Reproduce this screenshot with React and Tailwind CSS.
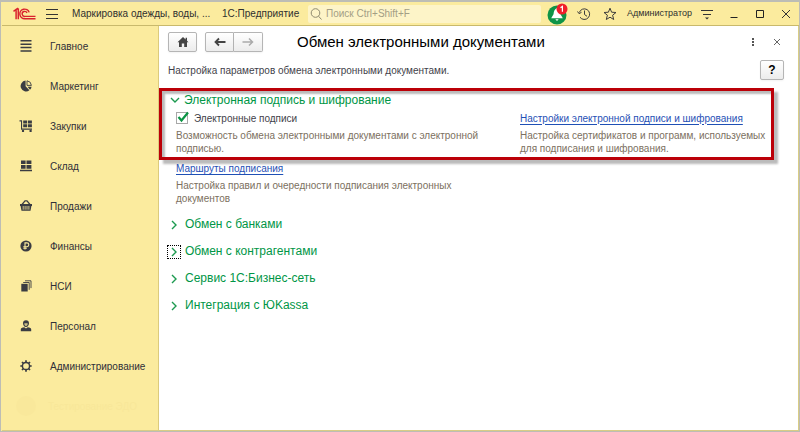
import { useState } from 'react';

const iconClass = 'h-4 w-4 shrink-0 text-[#3a3c42]';

const MenuIcon = () => (
  <svg viewBox="0 0 16 16" className={iconClass} fill="none" stroke="currentColor" strokeWidth="1.5">
    <path d="M2.5 2.8h11M2.5 6.2h11M2.5 9.6h11M2.5 13h11" />
  </svg>
);

const PieIcon = () => (
  <svg viewBox="0 0 16 16" className={iconClass} fill="currentColor">
    <path d="M7.6 2.6v5.6l3.8 4A5.4 5.4 0 1 1 7.6 2.6z" />
    <path d="M9 2.8a5 5 0 0 1 4.4 4.6H9z" fill="none" stroke="currentColor" strokeWidth="0.9" />
    <path d="M9.6 8.8h4a5 5 0 0 1-1.6 3z" />
  </svg>
);

const CartIcon = () => (
  <svg viewBox="0 0 16 16" className={iconClass} fill="currentColor">
    <path d="M1.5 2.3h2.6v8.2H14v1.2H3V3.5H1.5zM5.2 2.6h3.9v3H5.2zM9.9 2.6h4v3h-4zM5.2 6.3h3.9v3H5.2zM9.9 6.3h4v3h-4z" />
    <circle cx="5" cy="12.9" r="1.2" />
    <circle cx="12.6" cy="12.9" r="1.2" />
  </svg>
);

const StockIcon = () => (
  <svg viewBox="0 0 16 16" className={iconClass} fill="currentColor">
    <path d="M3 2.4h4.6v3.7H3zM8.5 2.4h4.9v3.7H8.5zM3 7h4.6v3.8H3zM8.5 7h4.9v3.8H8.5zM2 11.8h12v1.4H2z" />
  </svg>
);

const BasketIcon = () => (
  <svg viewBox="0 0 16 16" className={iconClass}>
    <path d="M4 6.5l3-3.7h2l3 3.7" fill="none" stroke="currentColor" strokeWidth="1.2" />
    <path d="M2 6h12v2h-.6l-.9 4.8h-9L2.6 8H2z" fill="currentColor" />
    <path d="M5.2 8v3.7M7.1 8v3.7M9 8v3.7M10.9 8v3.7" stroke="#fbeb9e" strokeWidth="0.8" />
  </svg>
);

const RubleIcon = () => (
  <svg viewBox="0 0 16 16" className={iconClass}>
    <circle cx="8" cy="8" r="5.6" fill="currentColor" />
    <path d="M7 11.5V4.9h1.9a1.9 1.9 0 0 1 0 3.8H5.3M5.3 10.2h3.5" fill="none" stroke="#fbeb9e" strokeWidth="1.1" />
  </svg>
);

const CopyIcon = () => (
  <svg viewBox="0 0 16 16" className={iconClass} fill="currentColor">
    <path d="M3.3 5.8h6.4v7.7H3.3z" />
    <path d="M5.2 4.5h6v7.3M7 2.8h6v7.3" fill="none" stroke="currentColor" strokeWidth="0.9" />
  </svg>
);

const PersonIcon = () => (
  <svg viewBox="0 0 16 16" className={iconClass} fill="currentColor">
    <path d="M8 2.3c1.9 0 3 1.2 3 3S9.9 9 8 9 5 7.1 5 5.3s1.100-3 3-3z" />
    <path d="M6.3 5.3h3.4c0 1.7-.6 2.8-1.7 2.8S6.3 7 6.3 5.3z" fill="#c9bd86" />
    <path d="M2.8 13.200v-2c0-1.200 1.300-1.800 3.500-2L8 10.400l1.700-1.200c2.200.2 3.500.8 3.500 2v2z" />
  </svg>
);

const GearIcon = () => (
  <svg viewBox="0 0 16 16" className={iconClass} fill="none" stroke="currentColor">
    <circle cx="8" cy="8" r="3.6" strokeWidth="1.5" />
    <path d="M8 2.3v2M8 11.7v2M2.3 8h2M11.7 8h2M4 4l1.400 1.400M10.600 10.600L12 12M4 12l1.400-1.400M10.600 5.400L12 4" strokeWidth="1.7" />
  </svg>
);

const SECTIONS = [
  { title: 'Главное', Icon: MenuIcon },
  { title: 'Маркетинг', Icon: PieIcon },
  { title: 'Закупки', Icon: CartIcon },
  { title: 'Склад', Icon: StockIcon },
  { title: 'Продажи', Icon: BasketIcon },
  { title: 'Финансы', Icon: RubleIcon },
  { title: 'НСИ', Icon: CopyIcon },
  { title: 'Персонал', Icon: PersonIcon },
  { title: 'Администрирование', Icon: GearIcon },
];

const GROUPS = [
  { title: 'Обмен с банками' },
  { title: 'Обмен с контрагентами', focused: true },
  { title: 'Сервис 1С:Бизнес-сеть' },
  { title: 'Интеграция с ЮKassa' },
];

const Logo = () => (
  <svg viewBox="0 0 24 14" className="h-3.5 w-6 shrink-0" fill="none" stroke="#d9232e">
    <path d="M1.500 4.300L4.100 2.400v9.900M6.300 1.500v10.800M4.100 2.600L6.300 1.200" strokeWidth="1.5" />
    <path d="M17.200 5.400A4.800 4.800 0 1 0 13 11.700h10.500" strokeWidth="1.4" />
    <path d="M15 6A2.500 2.500 0 1 0 13 9.400h10.500" strokeWidth="1.4" />
  </svg>
);

const TopBar = () => (
  <header className="flex h-6 items-center border-b border-[#c9b96c] bg-[#fbeb9e] pl-2.5 text-[#2f2f2f]">
    <Logo />
    <button aria-label="Меню" className="ml-2.5">
      <svg viewBox="0 0 12 12" className="h-3 w-3" stroke="#333" strokeWidth="1">
        <path d="M0 1.5h12M0 6.5h12M0 10.5h12" />
      </svg>
    </button>
    <span className="ml-3.5 w-[150px] shrink-0 whitespace-nowrap">Маркировка одежды, воды, ...</span>
    <span className="w-[86px] shrink-0 whitespace-nowrap">1С:Предприятие</span>
    <label className="flex h-[18px] min-w-0 flex-1 items-center gap-1 rounded-xs bg-[#fdf4c8] pl-0.5">
      <svg viewBox="0 0 12 12" className="h-3 w-3 shrink-0" fill="none" stroke="#8f8a70">
        <circle cx="5.5" cy="5" r="4.3" />
        <path d="M8.5 8.2L11.5 11.5" />
      </svg>
      <input
        type="text"
        aria-label="Поиск"
        placeholder="Поиск Ctrl+Shift+F"
        className="w-full bg-transparent text-[10px] outline-none placeholder:text-[#a39e85]"
      />
    </label>
    <button aria-label="Уведомления" className="ml-1.5">
      <svg viewBox="0 0 22 22" className="h-[22px] w-[22px]">
        <circle cx="10" cy="12" r="9.5" fill="#0f9447" />
        <path d="M10 5c2.200 1 3.200 3 3.500 6.300l2.300 4H4.200l2.300-4C6.800 8 7.800 6 10 5zM8.300 16.300h3.400L10 18z" fill="#fff" />
        <circle cx="15" cy="6" r="5.5" fill="#f01f2b" />
        <path d="M13.500 4.800L15.400 3.500v5.200" fill="none" stroke="#fff" strokeWidth="1.2" />
      </svg>
    </button>
    <button aria-label="История" className="ml-2">
      <svg viewBox="0 0 14 14" className="h-3.5 w-3.5" fill="none" stroke="#3c3c3c" strokeWidth="1">
        <path d="M2.300 5.500A5.300 5.300 0 1 1 3 10.200M.5 4.500l1.600 2.200 2.400-1.400M7.500 3.500v4l2.500 1.800" />
      </svg>
    </button>
    <button aria-label="Избранное" className="ml-3">
      <svg viewBox="0 0 14 14" className="h-3.5 w-3.5" fill="none" stroke="#3c3c3c" strokeWidth="1">
        <path d="M7 1.200l1.600 4 4.400.3-3.400 2.700 1.100 4.300L7 10.200l-3.700 2.300 1.100-4.300L1 5.500l4.400-.3z" />
      </svg>
    </button>
    <button className="ml-2.5 w-[66px] text-left text-[9px]">Администратор</button>
    <button aria-label="Сервис" className="ml-2">
      <svg viewBox="0 0 12 12" className="h-3 w-3" stroke="#333">
        <path d="M0 2.5h12M2 6.5h8" />
        <path d="M4 9.5h4L6 11.5z" fill="#333" stroke="none" />
      </svg>
    </button>
    <button aria-label="Свернуть" className="ml-4">
      <svg viewBox="0 0 10 10" className="h-2.5 w-2.5" stroke="#222">
        <path d="M1.5 8.5h7" />
      </svg>
    </button>
    <button aria-label="Развернуть" className="ml-4">
      <svg viewBox="0 0 10 10" className="h-2.5 w-2.5" fill="none" stroke="#222">
        <path d="M1.5 1.5h7v7h-7z" />
      </svg>
    </button>
    <button aria-label="Закрыть" className="mr-2 ml-4">
      <svg viewBox="0 0 10 10" className="h-2.5 w-2.5" stroke="#333">
        <path d="M1 1l8 8M9 1l-8 8" />
      </svg>
    </button>
  </header>
);

const Sidebar = () => (
  <nav className="w-[157px] shrink-0 border-r border-[#dccb7c] bg-[#fbeb9e] text-[#2f2f38]">
    {SECTIONS.map(({ title, Icon }) => (
      <a key={title} href="#" className="flex h-10 items-center gap-4 pl-4">
        <Icon />
        {title}
      </a>
    ))}
    <a href="#" className="flex h-10 items-center gap-3 pl-3.5 text-[#f8e799]">
      <span className="h-5 w-5 rounded-full bg-[#f9e89b]" />
      Тестирование ЭДО
    </a>
  </nav>
);

const Chevron = ({ open }) => (
  <svg viewBox="0 0 10 10" className="h-2.5 w-2.5" fill="none" stroke="#1c9a50" strokeWidth="1.4">
    <path d={open ? 'M1 3l4 4 4-4' : 'M3 1l4 4-4 4'} />
  </svg>
);

const toolButton = 'flex h-5 items-center justify-center border-[#b5b5b5] bg-gradient-to-b from-white to-[#ececec]';
const linkClass = 'text-[#1f50b5] underline underline-offset-2';
const hintClass = 'whitespace-nowrap text-[#7c7060]';

const App = () => {
  const [signatures, setSignatures] = useState(true);

  return (
    <div className="flex min-h-screen flex-col border border-t-2 border-[#bdbdb5] bg-[#fbeb9e] pl-px font-['Liberation_Sans',Arial,sans-serif] text-[10px] leading-[13px]">
      <TopBar />
      <div className="flex flex-1 border-r border-b border-[#d9cd85]">
        <Sidebar />

        <main className="min-w-0 flex-1 bg-white pt-1.5 text-[#3f3f4a]">
          <div className="flex h-5 items-center pr-4 pl-[9px]">
            <button aria-label="Начальная страница" className={`${toolButton} w-[29px] rounded-xs border shadow-xs`}>
              <svg viewBox="0 0 12 10" className="h-2.5 w-3" fill="#444">
                <path d="M6 0L.5 5.200H2V10h2.800V6.500h2.400V10H10V5.200h1.500L10 3.800V.8H8.600v1.600z" />
              </svg>
            </button>
            <div className="ml-2 flex">
              <button aria-label="Назад" className={`${toolButton} w-[29px] rounded-l-xs border shadow-xs`}>
                <svg viewBox="0 0 12 10" className="h-2.5 w-3" fill="none" stroke="#444" strokeWidth="1.8">
                  <path d="M11.500 5H2M5 1.500L1.500 5 5 8.500" />
                </svg>
              </button>
              <button aria-label="Вперёд" className={`${toolButton} w-[29px] rounded-r-xs border border-l-0 shadow-xs`}>
                <svg viewBox="0 0 12 10" className="h-2.5 w-3" fill="none" stroke="#aaa" strokeWidth="1.5">
                  <path d="M.5 5H10M7 1.500L10.500 5 7 8.500" />
                </svg>
              </button>
            </div>
            <h1 className="ml-[34px] flex-1 text-[15px] leading-5 whitespace-nowrap text-black">Обмен электронными документами</h1>
            <button aria-label="Ещё">
              <svg viewBox="0 0 10 10" className="h-2.5 w-2.5" fill="#555">
                <path d="M4 1h2v2H4zM4 4h2v2H4zM4 7h2v2H4z" />
              </svg>
            </button>
            <button aria-label="Закрыть форму" className="ml-3.5">
              <svg viewBox="0 0 10 10" className="h-2.5 w-2.5" stroke="#666">
                <path d="M2 2l6 6M8 2l-6 6" />
              </svg>
            </button>
          </div>

          <div className="mt-2 flex items-center justify-between pr-3.5 pl-[9px]">
            <p>Настройка параметров обмена электронными документами.</p>
            <button className={`${toolButton} w-6 rounded-xs border text-[12px] font-bold text-black shadow-xs`}>?</button>
          </div>

          <section className="mt-2 mr-6 h-[72px] border-3 border-[#bb0008] pl-2 shadow-[4px_4px_2px_#bbb,inset_3px_3px_2px_#bbb]">
            <button className="flex h-[18px] items-center gap-1 text-[12px] text-[#009646]">
              <Chevron open />
              Электронная подпись и шифрование
            </button>
            <div className="grid grid-cols-[344px_1fr] pl-1.5">
              <div>
                <label className="flex h-[18px] items-center gap-1.5">
                  <span className="grid h-3 w-3">
                    <input
                      type="checkbox"
                      checked={signatures}
                      onChange={(e) => setSignatures(e.target.checked)}
                      className="col-start-1 row-start-1 h-3 w-3 appearance-none border border-[#a8a8a8] bg-white"
                    />
                    {signatures && (
                      <svg viewBox="0 0 12 12" className="pointer-events-none col-start-1 row-start-1 h-3 w-3 overflow-visible" fill="none" stroke="#0b9444" strokeWidth="2.2">
                        <path d="M2.500 5l3 3.500L12 .5" />
                      </svg>
                    )}
                  </span>
                  Электронные подписи
                </label>
                <p className={`${hintClass} mt-0.5`}>
                  Возможность обмена электронными документами с электронной
                  <br />
                  подписью.
                </p>
              </div>
              <div>
                <a href="#" className={`${linkClass} flex h-[18px] items-center whitespace-nowrap`}>Настройки электронной подписи и шифрования</a>
                <p className={`${hintClass} mt-0.5`}>
                  Настройка сертификатов и программ, используемых
                  <br />
                  для подписания и шифрования.
                </p>
              </div>
            </div>
          </section>

          <div className="mt-0.5 pl-[17px]">
            <a href="#" className={linkClass}>Маршруты подписания</a>
            <p className={`${hintClass} mt-1`}>
              Настройка правил и очередности подписания электронных
              <br />
              документов
            </p>
          </div>

          <div className="mt-1.5 pl-2">
            {GROUPS.map(({ title, focused }) => (
              <button key={title} className="flex h-[27px] items-center gap-1 text-[12px] text-[#009646]">
                <span className={`flex h-3.5 w-3.5 items-center justify-center border border-dotted ${focused ? 'border-black' : 'border-transparent'}`}>
                  <Chevron />
                </span>
                {title}
              </button>
            ))}
          </div>
        </main>
      </div>
    </div>
  );
};

export default App;
